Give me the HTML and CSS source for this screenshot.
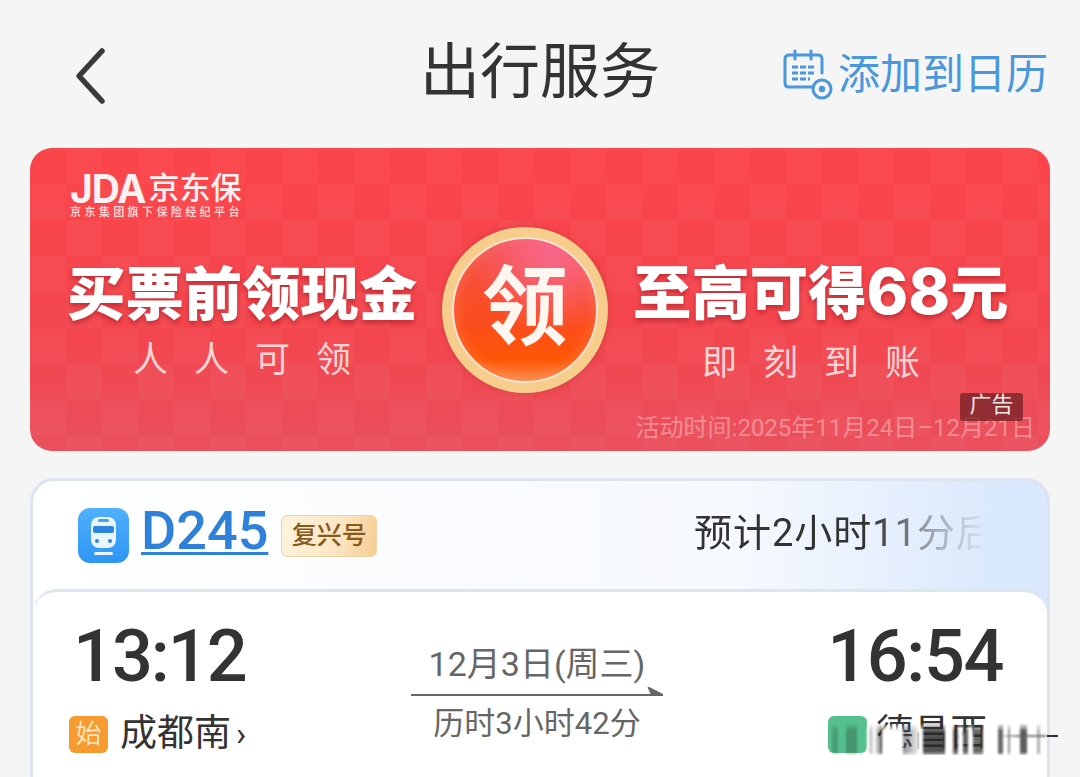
FILE: index.html
```html
<!DOCTYPE html>
<html lang="zh-CN">
<head>
  <meta charset="UTF-8">
  <meta name="viewport" content="width=device-width, initial-scale=1.0">
  <title>出行服务</title>
  <link rel="stylesheet" href="styles.css">
</head>
<body>
  <div class="page">
    <header class="topbar">
      <svg class="back-icon" width="34" height="58" viewBox="0 0 34 58">
        <path d="M28 4 L5 29 L28 54" fill="none" stroke="#3a3a3a" stroke-width="5.5" stroke-linecap="round" stroke-linejoin="round"/>
      </svg>
      <div class="topbar-title">出行服务</div>
      <div class="calendar-link">
        <svg class="calendar-icon" width="50" height="52" viewBox="0 0 50 52">
          <path d="M30 38 H6 Q2 38 2 34 V10 Q2 6 6 6 H35 Q39 6 39 10 V24" fill="none" stroke="#4a97dd" stroke-width="3" stroke-linecap="round"/>
          <path d="M12 2 V10 M28 2 V10" stroke="#4a97dd" stroke-width="3" stroke-linecap="round"/>
          <path d="M9 18 H32 M9 24 H32 M9 30 H27" stroke="#4a97dd" stroke-width="2.8" stroke-dasharray="6 2"/>
          <circle cx="39" cy="40" r="9" fill="#f5f5f5" stroke="#4a97dd" stroke-width="3"/>
          <circle cx="39" cy="40" r="3.2" fill="#4a97dd"/>
        </svg>
        <span>添加到日历</span>
      </div>
    </header>

    <section class="banner">
      <div class="banner-logo">
        <div class="logo-main"><span class="logo-jda">JDA</span><span class="logo-cn">京东保</span></div>
        <div class="logo-sub">京东集团旗下保险经纪平台</div>
      </div>
      <div class="banner-main">
        <div class="banner-col banner-col-left">
          <div class="banner-big">买票前领现金</div>
          <div class="banner-small">人人可领</div>
        </div>
        <div class="coin"><div class="coin-inner">领</div></div>
        <div class="banner-col banner-col-right">
          <div class="banner-big">至高可得<span class="banner-num">68</span>元</div>
          <div class="banner-small">即刻到账</div>
        </div>
      </div>
      <div class="banner-date">活动时间:2025年11月24日–12月21日</div>
      <div class="ad-badge">广告</div>
    </section>

    <section class="trip-card">
      <div class="trip-head">
        <svg class="train-icon" width="51" height="55" viewBox="0 0 51 55">
          <defs>
            <linearGradient id="trainBg" x1="0" y1="0" x2="0" y2="1">
              <stop offset="0" stop-color="#4fb0fb"/>
              <stop offset="1" stop-color="#2f95f3"/>
            </linearGradient>
          </defs>
          <rect width="51" height="55" rx="12" fill="url(#trainBg)"/>
          <rect x="13" y="9" width="25" height="31" rx="8" fill="#e9f4fe"/>
          <rect x="20" y="11" width="11" height="3" rx="1.5" fill="#4a9de8"/>
          <rect x="15" y="18" width="21" height="7" rx="2" fill="#2f85dc"/>
          <circle cx="19" cy="33" r="2" fill="#2f85dc"/>
          <circle cx="32" cy="33" r="2" fill="#2f85dc"/>
          <rect x="16" y="44" width="19" height="3" rx="1.5" fill="#e9f4fe"/>
        </svg>
        <span class="train-no">D245</span>
        <span class="train-type">复兴号</span>
        <span class="trip-eta">预计2小时11分后</span>
      </div>
      <div class="trip-body">
        <div class="stop">
          <div class="stop-time">13:12</div>
          <div class="stop-name">
            <span class="stop-tag stop-tag-start">始</span>
            <span>成都南</span>
            <span class="stop-more">›</span>
          </div>
        </div>
        <div class="route">
          <div class="route-date">12月3日(周三)</div>
          <svg class="route-arrow" width="252" height="10" viewBox="0 0 252 10">
            <path d="M0 8 H252 L238 1 L241 8" fill="#666" stroke="#666" stroke-width="2"/>
          </svg>
          <div class="route-length">历时3小时42分</div>
        </div>
        <div class="stop stop-end">
          <div class="stop-time">16:54</div>
          <div class="stop-name">
            <span class="stop-tag stop-tag-end">终</span>
            <span>德昌西</span>
          </div>
        </div>
      </div>
    </section>

    <div class="smear"></div>
    <div class="smear-tail"></div>
  </div>
</body>
</html>
```

FILE: styles.css
```css
* {
  box-sizing: border-box;
}

body {
  margin: 0;
  background-color: #f5f5f5;
  font-family: Roboto, "Noto Sans CJK SC", sans-serif;
  color: #333333;
}

.page {
  position: relative;
  width: 1080px;
  height: 777px;
  padding: 0 30px;
  overflow: hidden;
}

/* top bar */
.topbar {
  display: grid;
  grid-template-columns: 1fr auto 1fr;
  align-items: center;
  height: 148px;
  padding: 0 2px;
}

.back-icon {
  display: block;
  margin: 4px 0 0 42px;
}

.topbar-title {
  margin-bottom: 2px;
  font-size: 60px;
  line-height: 70px;
  color: #333333;
}

.calendar-link {
  display: flex;
  align-items: center;
  justify-content: flex-end;
  gap: 5px;
  margin-top: 2px;
  font-size: 42px;
  line-height: 52px;
  color: #4a97dd;
}

/* banner */
.banner {
  position: relative;
  height: 303px;
  padding: 26px 16px 0 38px;
  border-radius: 22px;
  overflow: hidden;
  background-color: #f4444c;
  background-image:
    repeating-conic-gradient(rgba(255, 255, 255, 0.028) 0 25%, rgba(255, 255, 255, 0) 0 50%),
    linear-gradient(180deg, #fb454b 0%, #f4464e 60%, #e9505c 100%);
  background-size: 72px 72px, 100% 100%;
  color: #ffffff;
}

.banner-logo {
  height: 48px;
  width: 190px;
  padding-left: 2px;
}

.logo-main {
  display: flex;
  align-items: center;
  height: 30px;
  gap: 3px;
}

.logo-jda {
  font-family: Inter, sans-serif;
  font-size: 39px;
  line-height: 30px;
  font-weight: 700;
  letter-spacing: -1px;
  color: #fff1f1;
}

.logo-cn {
  font-size: 31px;
  line-height: 30px;
  font-weight: 500;
  color: #fff1f1;
}

.logo-sub {
  margin-top: 3px;
  font-size: 11px;
  line-height: 12px;
  font-weight: 700;
  letter-spacing: 3.4px;
  white-space: nowrap;
  opacity: 0.75;
}

.banner-main {
  display: flex;
  align-items: flex-start;
  margin: 5px 0 0 -1px;
}

.banner-col {
  text-align: center;
}

.banner-col-left {
  width: 350px;
  margin-right: 25px;
}

.banner-col-right {
  width: 378px;
  margin-left: 25px;
}

.banner-big {
  margin-top: 32px;
  font-size: 58.4px;
  line-height: 72px;
  font-weight: 900;
  white-space: nowrap;
  text-shadow: 0 3px 5px rgba(130, 10, 20, 0.45);
}

.banner-col-right .banner-big {
  margin-top: 28px;
  padding-right: 3px;
}

.banner-num {
  font-family: Inter, sans-serif;
  font-size: 63px;
  font-weight: 800;
}

.banner-small {
  margin-top: 5px;
  font-size: 35px;
  line-height: 50px;
  letter-spacing: 26px;
  padding-left: 26px;
  white-space: nowrap;
  color: #fbd5d6;
}

.banner-col-right .banner-small {
  margin-top: 9px;
  padding-left: 4px;
}

.coin {
  flex: none;
  width: 166px;
  height: 166px;
  padding: 10px;
  border-radius: 50%;
  background-color: #f6cd8c;
  box-shadow: 0 0 6px rgba(160, 30, 30, 0.35);
}

.coin-inner {
  width: 146px;
  height: 146px;
  border-radius: 50%;
  border: 2px solid #fde3d0;
  background: radial-gradient(circle at 68% 10%, #f9688c 0%, rgba(249, 104, 140, 0) 50%),
    radial-gradient(circle at 50% 50%, rgba(255, 80, 0, 0) 60%, rgba(255, 170, 130, 0.6) 100%),
    linear-gradient(180deg, #f3504e 0%, #fb4d1c 60%, #ff5606 85%, #f98a4a 100%);
  font-size: 86px;
  line-height: 140px;
  font-weight: 600;
  text-align: center;
  color: #fff6f0;
}

.banner-date {
  position: absolute;
  right: 15px;
  bottom: 10px;
  font-size: 24px;
  line-height: 26px;
  white-space: nowrap;
  color: rgba(255, 255, 255, 0.36);
}

.ad-badge {
  position: absolute;
  left: 930px;
  top: 245px;
  width: 63px;
  height: 28px;
  border-radius: 3px;
  background-color: rgba(110, 30, 35, 0.72);
  font-size: 22px;
  line-height: 24px;
  text-align: center;
  color: #f4e6e6;
}

/* trip card */
.trip-card {
  height: 320px;
  margin-top: 27px;
  border: 3px solid #dbe4ef;
  border-radius: 24px;
  background: linear-gradient(90deg, #ffffff 0%, #f6f9fe 70%, #d9e8fc 96%);
}

.trip-head {
  display: flex;
  align-items: center;
  height: 108px;
  padding: 0 66px 4px 45px;
}

.train-icon {
  flex: none;
  margin-top: 5px;
}

.train-no {
  margin: -5px 0 0 12px;
  font-size: 54px;
  line-height: 56px;
  font-weight: 500;
  color: #2f80d8;
  text-decoration: underline;
  text-decoration-thickness: 3px;
  text-underline-offset: 3px;
}

.train-type {
  margin: 6px 0 0 13px;
  width: 96px;
  height: 42px;
  border: 1px solid #ecd3a6;
  border-radius: 6px;
  background: linear-gradient(100deg, #fdf3dd 0%, #fbe6c3 60%, #f6cd92 100%);
  font-size: 25px;
  line-height: 40px;
  font-weight: 500;
  text-align: center;
  color: #8a5a1c;
}

.trip-eta {
  margin-left: auto;
  width: 287px;
  overflow: hidden;
  font-size: 38px;
  line-height: 50px;
  letter-spacing: 1px;
  white-space: nowrap;
  color: #333333;
  -webkit-mask-image: linear-gradient(90deg, #000 62%, rgba(0, 0, 0, 0.4) 82%, rgba(0, 0, 0, 0.05) 100%);
  mask-image: linear-gradient(90deg, #000 62%, rgba(0, 0, 0, 0.4) 82%, rgba(0, 0, 0, 0.05) 100%);
}

.trip-body {
  display: grid;
  grid-template-columns: 1fr 252px 1fr;
  height: 211px;
  padding: 23px 43px 0 37px;
  border-top: 3px solid #dde5ee;
  border-radius: 24px 24px 0 0;
  background-color: #ffffff;
}

.stop-time {
  margin-left: 3px;
  font-size: 72px;
  line-height: 84px;
  font-weight: 500;
  letter-spacing: -2px;
  color: #333333;
}

.stop-name {
  display: flex;
  align-items: center;
  gap: 12px;
  margin: 13px 0 0 -1px;
  font-size: 37px;
  line-height: 44px;
  color: #333333;
}

.stop-tag {
  width: 39px;
  height: 37px;
  border-radius: 6px;
  font-size: 26px;
  line-height: 37px;
  text-align: center;
  color: #fbe3bd;
}

.stop-tag-start {
  background-color: #f59b2f;
}

.stop-tag-end {
  background-color: #55c08d;
  color: #55c08d;
}

.stop-more {
  margin-left: -7px;
  font-size: 34px;
}

.stop-end {
  justify-self: end;
}

.stop-end .stop-time {
  margin-left: 0;
  margin-right: 1px;
  letter-spacing: -1.4px;
}

.stop-end .stop-name {
  gap: 9px;
  margin-left: 1px;
}

.route {
  padding-top: 27px;
  text-align: center;
  color: #666666;
}

.route-date {
  font-size: 34px;
  line-height: 44px;
  white-space: nowrap;
}

.route-arrow {
  display: block;
  margin-top: 1px;
}

.route-length {
  margin-top: 5px;
  font-size: 31px;
  line-height: 44px;
  white-space: nowrap;
}

/* smeared strip lying over the bottom right of the screenshot */
.smear {
  position: absolute;
  left: 828px;
  top: 723px;
  width: 219px;
  height: 32px;
  background-image:
    linear-gradient(90deg, rgba(255, 255, 255, 0) 170px, rgba(90, 90, 90, 0.8) 190px),
    linear-gradient(90deg,
      rgba(40, 70, 55, 0) 0 4px, rgba(40, 70, 55, 0.28) 4px 10px, rgba(40, 70, 55, 0) 10px 18px, rgba(40, 70, 55, 0.35) 18px 29px, rgba(40, 70, 55, 0) 29px 39px,
      rgba(255, 255, 255, 1) 39px 41px, rgba(60, 60, 60, 0.25) 41px 45px, #ffffff 45px 48px, rgba(60, 60, 60, 0.35) 48px 52px, rgba(30, 30, 30, 0.8) 52px 54px, #ffffff 54px 75px,
      rgba(50, 50, 50, 0.55) 75px, rgba(180, 180, 180, 0.3) 90px, #ffffff 90px 95px,
      rgba(40, 40, 40, 0.8) 95px 117px, #ffffff 117px 125px, rgba(40, 40, 40, 0.75) 125px 130px, #ffffff 130px 135px, rgba(40, 40, 40, 0.75) 135px 140px, #ffffff 140px 145px,
      rgba(40, 40, 40, 0.7) 145px 155px, #ffffff 155px 170px, rgba(40, 40, 40, 0.7) 170px 175px, #ffffff 175px 180px, rgba(40, 40, 40, 0.5) 180px 182px, #ffffff 182px 192px,
      rgba(40, 40, 40, 0.75) 192px 199px, #ffffff 199px 209px, rgba(60, 60, 60, 0.4) 209px 212px, #ffffff 212px 219px);
  background-size: 100% 2px, 100% 100%;
  background-position: 0 12px, 0 0;
  background-repeat: no-repeat;
  filter: blur(0.8px);
  -webkit-mask-image: linear-gradient(180deg, rgba(0, 0, 0, 0) 0, #000 8px, #000 28px, rgba(0, 0, 0, 0.5) 100%);
  mask-image: linear-gradient(180deg, rgba(0, 0, 0, 0) 0, #000 8px, #000 28px, rgba(0, 0, 0, 0.5) 100%);
}

.smear-tail {
  position: absolute;
  left: 1047px;
  top: 735px;
  width: 11px;
  height: 2px;
  background-color: #333333;
}
```
